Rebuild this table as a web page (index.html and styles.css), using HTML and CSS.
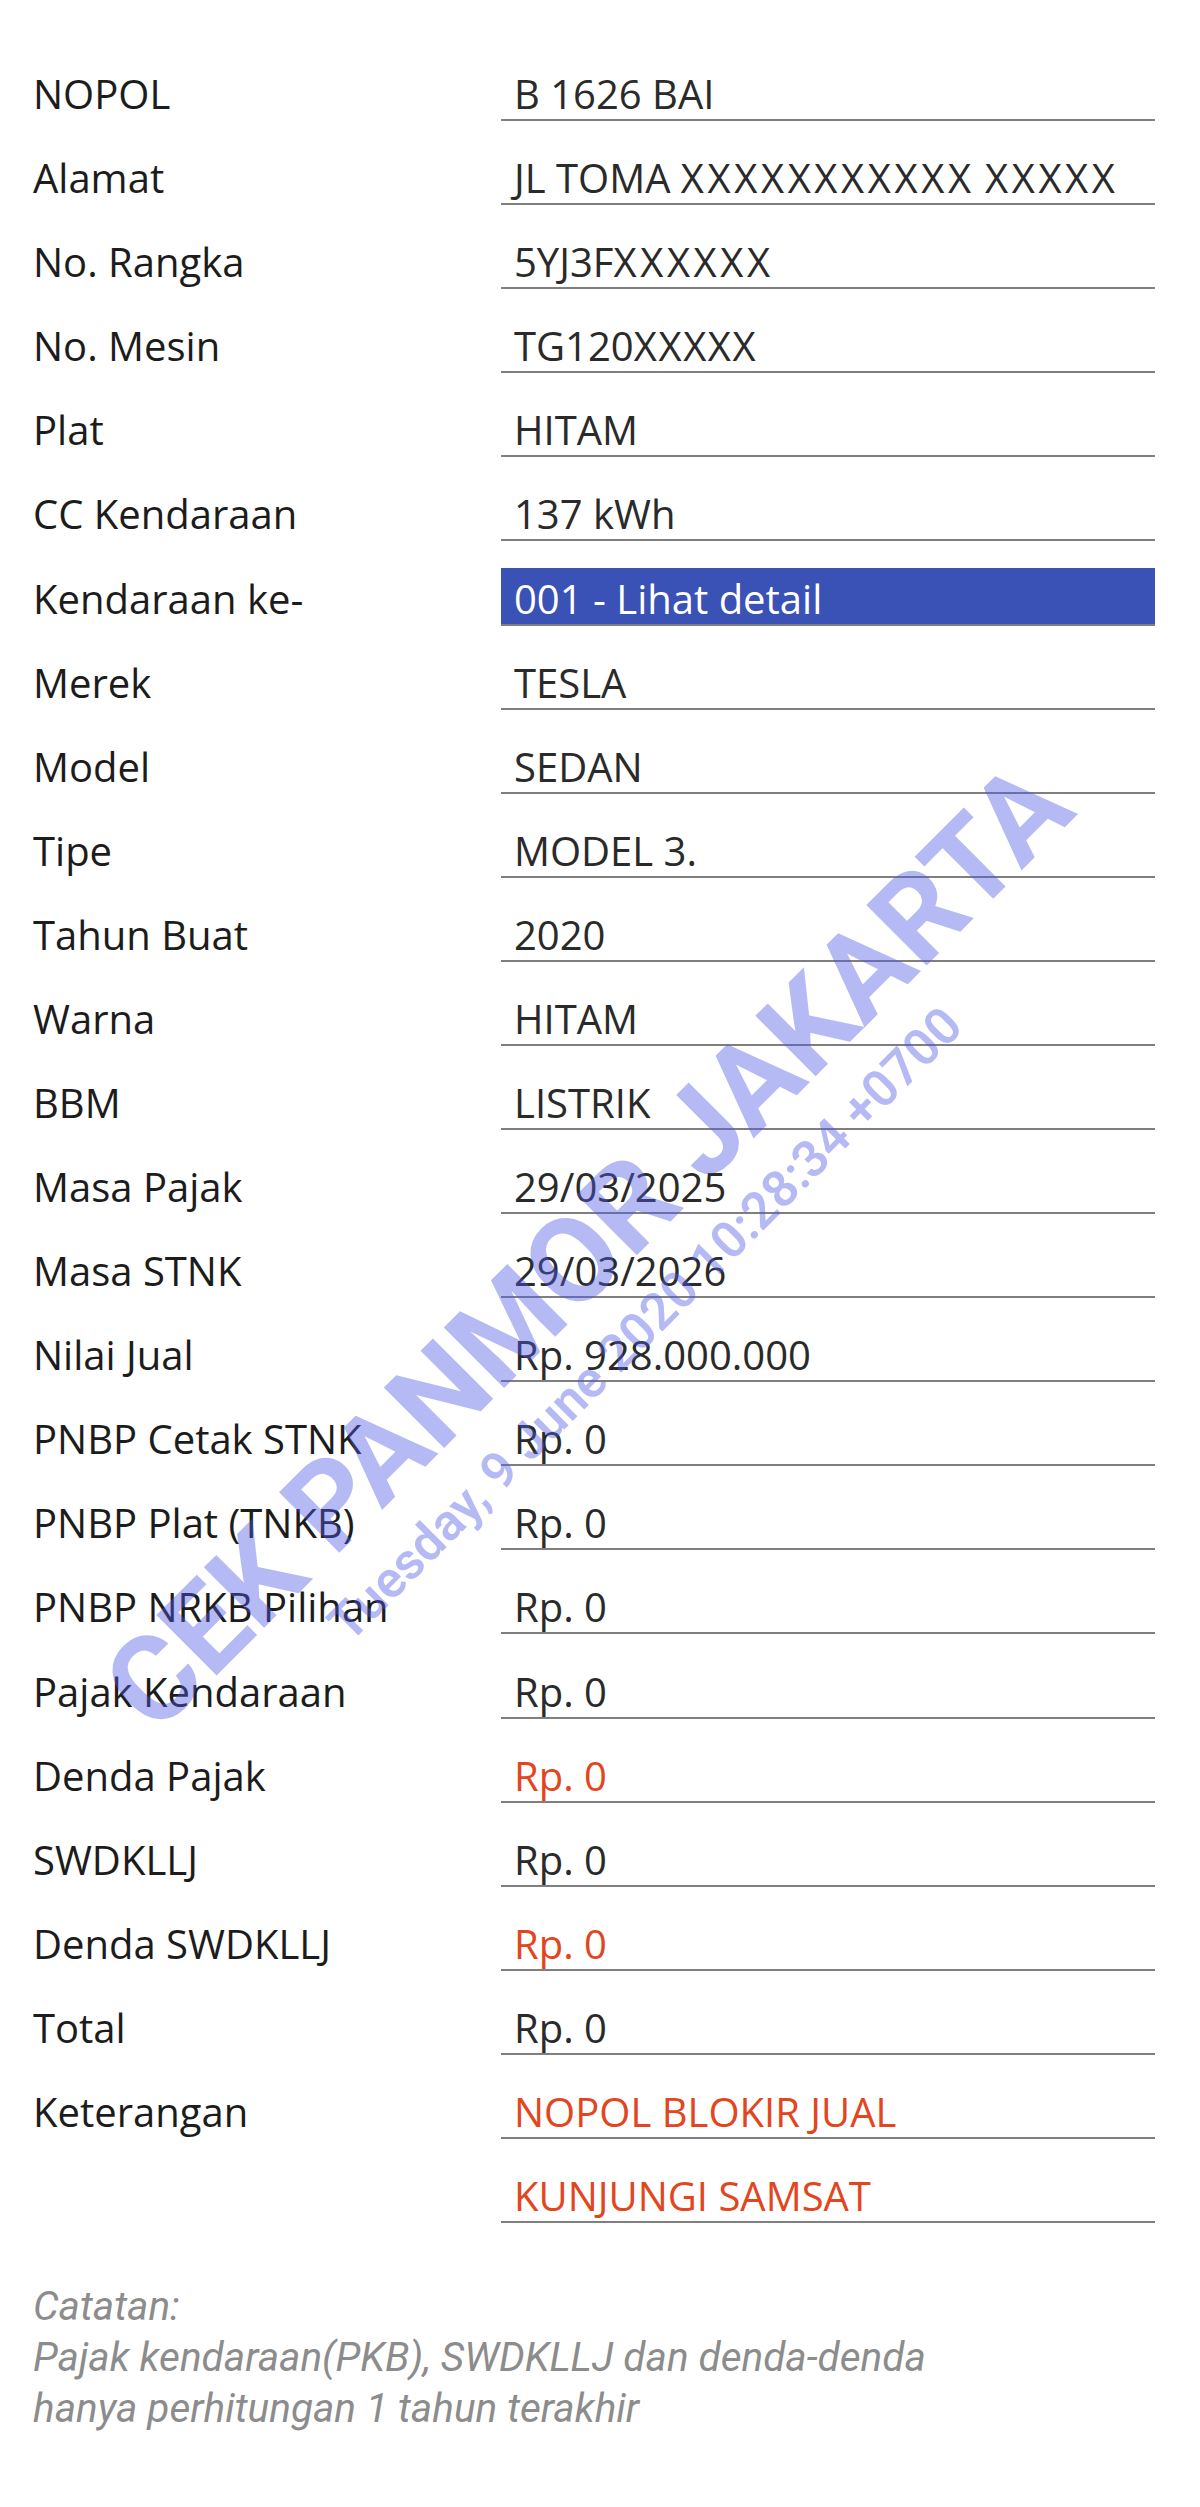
FILE: index.html
```html
<!DOCTYPE html>
<html lang="id">
<head>
<meta charset="utf-8">
<title>Info Kendaraan</title>
<link rel="stylesheet" href="styles.css">
</head>
<body>
<main class="page">
  <section class="table">
    <div class="row"><div class="label">NOPOL</div><div class="value">B 1626 BAI</div></div>
    <div class="row"><div class="label">Alamat</div><div class="value"><span>JL TOMA <span class="mask">XXXXXXXXXXX</span> <span class="mask">XXXXX</span></span></div></div>
    <div class="row"><div class="label">No. Rangka</div><div class="value"><span>5YJ3F<span class="mask">XXXXXX</span></span></div></div>
    <div class="row"><div class="label">No. Mesin</div><div class="value"><span>TG120<span class="mask mask-sm">XXXXX</span></span></div></div>
    <div class="row"><div class="label">Plat</div><div class="value">HITAM</div></div>
    <div class="row"><div class="label">CC Kendaraan</div><div class="value">137 kWh</div></div>
    <div class="row"><div class="label">Kendaraan ke-</div><div class="value value-link">001 - Lihat detail</div></div>
    <div class="row"><div class="label">Merek</div><div class="value">TESLA</div></div>
    <div class="row"><div class="label">Model</div><div class="value">SEDAN</div></div>
    <div class="row"><div class="label">Tipe</div><div class="value">MODEL 3.</div></div>
    <div class="row"><div class="label">Tahun Buat</div><div class="value">2020</div></div>
    <div class="row"><div class="label">Warna</div><div class="value">HITAM</div></div>
    <div class="row"><div class="label">BBM</div><div class="value">LISTRIK</div></div>
    <div class="row"><div class="label">Masa Pajak</div><div class="value">29/03/2025</div></div>
    <div class="row"><div class="label">Masa STNK</div><div class="value">29/03/2026</div></div>
    <div class="row"><div class="label">Nilai Jual</div><div class="value">Rp. 928.000.000</div></div>
    <div class="row"><div class="label">PNBP Cetak STNK</div><div class="value">Rp. 0</div></div>
    <div class="row"><div class="label">PNBP Plat (TNKB)</div><div class="value">Rp. 0</div></div>
    <div class="row"><div class="label">PNBP NRKB Pilihan</div><div class="value">Rp. 0</div></div>
    <div class="row"><div class="label">Pajak Kendaraan</div><div class="value">Rp. 0</div></div>
    <div class="row"><div class="label">Denda Pajak</div><div class="value value-red">Rp. 0</div></div>
    <div class="row"><div class="label">SWDKLLJ</div><div class="value">Rp. 0</div></div>
    <div class="row"><div class="label">Denda SWDKLLJ</div><div class="value value-red">Rp. 0</div></div>
    <div class="row"><div class="label">Total</div><div class="value">Rp. 0</div></div>
    <div class="row"><div class="label">Keterangan</div><div class="value value-red">NOPOL BLOKIR JUAL</div></div>
    <div class="row"><div class="label"></div><div class="value value-red">KUNJUNGI SAMSAT</div></div>
  </section>

  <p class="note">Catatan:<br>Pajak kendaraan(PKB), SWDKLLJ dan denda-denda<br>hanya perhitungan 1 tahun terakhir</p>

  <div class="watermark wm-main">CEK PANMOR JAKARTA</div>
  <div class="watermark wm-date">Tuesday, 9 June 2020 10:28:34 +0700</div>
</main>
</body>
</html>
```

FILE: styles.css
```css
* { box-sizing: border-box; }

html, body {
  margin: 0;
  padding: 0;
  background: #ffffff;
}

.page {
  position: relative;
  min-height: 2507px;
  padding: 37px 45px 0 33px;
  overflow: hidden;
}

.table {
  display: flex;
  flex-direction: column;
}

.row {
  display: grid;
  grid-template-columns: 468px 654px;
  height: 84.08px;
  align-items: end;
}

.label {
  font-family: "Open Sans", "Noto Sans", sans-serif;
  font-size: 40px;
  line-height: 40px;
  color: #1c1c1c;
  padding-bottom: 7px;
  white-space: nowrap;
}

.value {
  height: 58px;
  display: flex;
  align-items: flex-end;
  padding: 0 0 5px 13px;
  border-bottom: 2px solid #7f7f7f;
  font-family: "Open Sans", "Noto Sans", sans-serif;
  font-size: 40px;
  line-height: 40px;
  color: #2a2a2a;
  white-space: pre;
}

.mask {
  letter-spacing: 3.6px;
}

.mask-sm {
  letter-spacing: 1.6px;
}

.value-link {
  background: #3a51b6;
  color: #ffffff;
}

.value-red {
  color: #e2461e;
}

.note {
  margin: 58px 0 0 0;
  font-family: Roboto, "Liberation Sans", sans-serif;
  font-style: italic;
  font-size: 40.5px;
  line-height: 51px;
  color: #8c8c8c;
}

.watermark {
  position: absolute;
  left: 0;
  top: 0;
  white-space: nowrap;
  pointer-events: none;
  font-family: Roboto, "Liberation Sans", sans-serif;
  font-weight: 700;
  color: rgba(80, 90, 228, 0.42);
  transform-origin: center center;
}

.wm-main {
  font-size: 120px;
  line-height: 120px;
  left: 588px;
  top: 1246px;
  transform: translate(-50%, -50%) rotate(-45deg);
}

.wm-date {
  font-size: 51px;
  line-height: 51px;
  font-weight: 600;
  left: 645px;
  top: 1324px;
  transform: translate(-50%, -50%) rotate(-45deg);
}
```
